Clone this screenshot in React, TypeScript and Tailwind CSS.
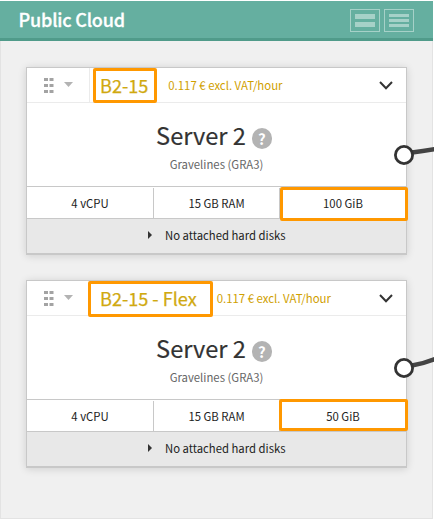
type Server = {
  flavor: string;
  flex: boolean;
  disk: string;
  linkPath: string;
};

const servers: Server[] = [
  { flavor: "B2-15", flex: false, disk: "100 GiB", linkPath: "M19 9.5 Q30 8 42 6" },
  { flavor: "B2-15 - Flex", flex: true, disk: "50 GiB", linkPath: "M19 9.5 Q31 7.5 42 3" },
];

function DragHandle() {
  return (
    <svg width="10" height="15" viewBox="0 0 10 15" fill="#a3a3a3" className="mt-[10px] ml-[17px]">
      {[0, 6, 12].map((y) => (
        <g key={y}>
          <rect x="0" y={y} width="4" height="3" />
          <rect x="5.5" y={y} width="4" height="3" />
        </g>
      ))}
    </svg>
  );
}

function Connector({ path }: { path: string }) {
  return (
    <svg className="absolute top-[75px] left-[366px]" width="41" height="24" viewBox="0 0 41 24">
      <path d={path} fill="none" stroke="#444" strokeWidth="4.5" />
      <circle cx="11" cy="12" r="8.6" fill="#fff" stroke="#333" strokeWidth="2.8" />
    </svg>
  );
}

function ServerCard({ server }: { server: Server }) {
  return (
    <section className="relative w-[381px] border border-b-2 border-[#c8c8c8] bg-white shadow-[0_1px_8px_rgba(0,0,0,0.14)]">
      <header className="flex h-[35px] items-center border-b border-[#ebebeb]">
        <div className="flex h-full w-[63px] shrink-0 items-start border-r border-[#ebebeb]">
          <DragHandle />
          <svg width="9" height="5" viewBox="0 0 9 5" className="mt-[14px] ml-[10px]">
            <path d="M0 0h9L4.5 5z" fill="#b3b3b3" />
          </svg>
        </div>
        <h2 className="ml-[10px] text-[18.1px] leading-[34px] whitespace-nowrap text-[#d0a910] [-webkit-text-stroke:0.25px_#d0a910]">
          {server.flavor}
        </h2>
        <span className="ml-[20px] text-[11.4px] leading-[34px] whitespace-nowrap text-[#d0a000]">
          0.117 € excl. VAT/hour
        </span>
        <svg width="14" height="9" viewBox="0 0 14 9" fill="none" className="mr-[13px] ml-auto">
          <path d="M1 1L7 7.2L13 1" stroke="#333" strokeWidth="2" />
        </svg>
      </header>

      <div className="flex h-[84px] flex-col items-center border-b border-[#c8c8c8] pt-[15px] text-[#333]">
        <div className="mr-[5px] flex h-[34px] items-center">
          <h3 className="text-[23.6px] leading-[34px] whitespace-nowrap [-webkit-text-stroke:0.2px_#333]">Server 2</h3>
          <span className="mt-[7px] ml-[6px] flex h-[21px] w-5 items-center justify-center rounded-full bg-[#b3b3b3] text-[15px] leading-[21px] font-bold text-white">
            ?
          </span>
        </div>
        <p className="mt-[2px] text-[11.35px] leading-[20px] text-[#666]">Gravelines (GRA3)</p>
      </div>

      <div className="grid h-8 grid-cols-[127px_126px_126px] border-b border-[#c8c8c8] pt-px text-center text-[11.35px] leading-[30px] text-[#222]">
        <span className="border-r border-[#c8c8c8]">4 vCPU</span>
        <span className="border-r border-[#c8c8c8]">15 GB RAM</span>
        <span>{server.disk}</span>
      </div>

      <div className="flex h-[34px] items-center bg-[#e8e8e8] pl-[121px] text-[11.3px] leading-[32px] text-[#222]">
        <svg width="4" height="8" viewBox="0 0 4 8" className="mr-[13px] mb-[2px]">
          <path d="M0 0L4 4L0 8z" fill="#333" />
        </svg>
        <span className="mb-[3px]">No attached hard disks</span>
      </div>

      <div
        className={`absolute rounded-[2px] border-3 border-[#ff9800] ${
          server.flex ? "top-0 left-[61px] h-9 w-[125px]" : "top-0 left-[66px] h-[35px] w-16"
        }`}
      />
      <div
        className={`absolute rounded-[2px] border-3 border-[#ff9800] ${
          server.flex ? "top-[118px] left-[252px] h-8 w-[129px]" : "top-[119px] left-[253px] h-[34px] w-[128px]"
        }`}
      />
      <Connector path={server.linkPath} />
    </section>
  );
}

export default function App() {
  return (
    <main className="h-[519px] w-[434px] overflow-hidden bg-white pt-px font-['Noto_Sans_CJK_SC',sans-serif]">
      <div className="flex h-[518px] w-[433px] flex-col bg-[#f0f0f0]">
        <header className="flex h-10 shrink-0 items-center border-b-3 border-[#509b8a] bg-[#65afa0] pr-[19px] pl-[18.6px]">
          <h1 className="mb-px text-[18px] leading-[36px] font-medium tracking-[-0.2px] whitespace-nowrap text-white [-webkit-text-stroke:0.3px_#fff]">
            Public Cloud
          </h1>
          <div className="mt-px ml-auto flex gap-1">
            <div className="flex h-[23px] w-[30px] flex-col items-center gap-[3px] border border-[#a6d1c8] pt-1">
              <span className="h-[5px] w-5 bg-[#a6d1c8]" />
              <span className="h-[5px] w-5 bg-[#a6d1c8]" />
            </div>
            <div className="flex h-[23px] w-[30px] flex-col items-center gap-[2px] border border-[#a6d1c8] pt-1">
              <span className="h-[3px] w-5 bg-[#a6d1c8]" />
              <span className="h-[3px] w-5 bg-[#a6d1c8]" />
              <span className="h-[3px] w-5 bg-[#a6d1c8]" />
            </div>
          </div>
        </header>
        <div className="flex flex-1 flex-col gap-[25px] border-x border-b border-[#e3e3e3] pt-[26px] pl-[25px]">
          {servers.map((server) => (
            <ServerCard key={server.flavor} server={server} />
          ))}
        </div>
      </div>
    </main>
  );
}
